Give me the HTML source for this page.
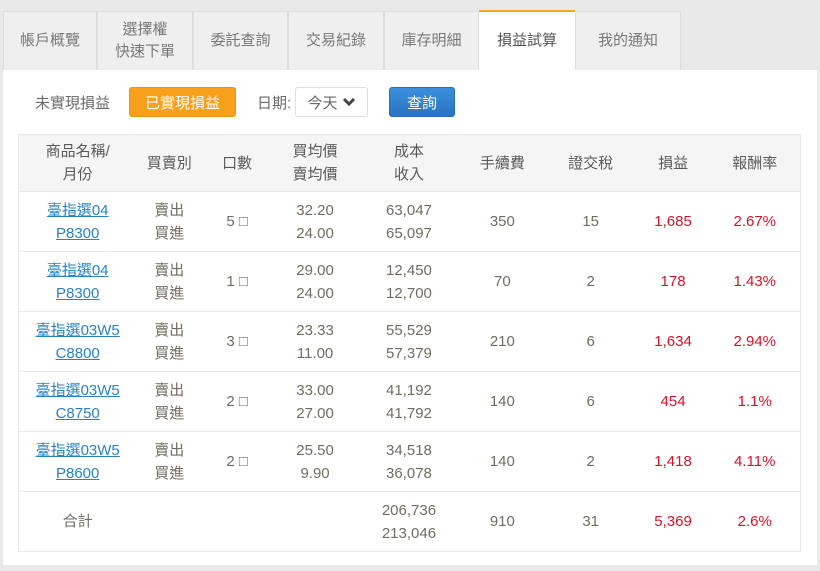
<!DOCTYPE html>
<html><head><meta charset="utf-8"><style>
*{box-sizing:border-box;margin:0;padding:0}
body{width:820px;height:571px;background:#e9e9e9;font-family:"Liberation Sans","Noto Sans CJK TC",sans-serif;font-size:15px;color:#6a6a6a;position:relative;overflow:hidden}
.tab{position:absolute;top:11px;height:59px;background:#efefef;border:1px solid #dedede;border-bottom:none;display:flex;align-items:center;justify-content:center;text-align:center;line-height:22px;color:#777}
.tab.act{background:#fff;border-top:2px solid #f5a623;color:#555}
.panel{position:absolute;left:3px;top:70px;width:814px;height:495px;background:#fff}
.abs{position:absolute}
.btn{position:absolute;top:87px;height:30px;border-radius:3px;display:flex;align-items:center;justify-content:center}
table{position:absolute;left:18px;top:134px;width:783px;border-collapse:collapse;border:1px solid #e8e8e8}
td,th{text-align:center;line-height:23px;font-weight:normal;color:#736b5f;border-top:1px solid #e8e8e8}
th{background:#f5f5f5;height:57px;color:#5a5a5a}
td{height:60px}
a{color:#2a82c0;text-decoration:underline}
.r{color:#d0142c}
</style></head><body>
<div class="tab" style="left:3px;width:94px">帳戶概覽</div>
<div class="tab" style="left:97px;width:96px">選擇權<br>快速下單</div>
<div class="tab" style="left:193px;width:95px">委託查詢</div>
<div class="tab" style="left:288px;width:96px">交易紀錄</div>
<div class="tab" style="left:384px;width:95px">庫存明細</div>
<div class="tab" style="left:575px;width:106px">我的通知</div>
<div class="panel"></div>
<div class="tab act" style="left:479px;width:96px;height:60px;top:10px;border-left:none;border-right:none">損益試算</div>
<div class="abs" style="left:35px;top:92px">未實現損益</div>
<div class="btn" style="left:129px;width:107px;background:#f8a01b;color:#fff;border:1px solid #e8940f">已實現損益</div>
<div class="abs" style="left:257px;top:92px">日期:</div>
<div class="btn" style="left:295px;width:73px;border:1px solid #ddd;color:#666">今天 <svg width="14" height="12" viewBox="0 0 14 12" style="margin-left:4px"><path d="M2 3l5 5 5-5" stroke="#444" stroke-width="3" fill="none"/></svg></div>
<div class="btn" style="left:389px;width:66px;background:linear-gradient(#3a8fdc,#2a74c2);color:#fff;border:1px solid #2a6fb5">查詢</div>
<table>
<colgroup><col style="width:118px"><col style="width:66px"><col style="width:70px"><col style="width:86px"><col style="width:102px"><col style="width:85px"><col style="width:92px"><col style="width:73px"><col style="width:91px"></colgroup>
<tr><th>商品名稱/<br>月份</th><th>買賣別</th><th>口數</th><th>買均價<br>賣均價</th><th>成本<br>收入</th><th>手續費</th><th>證交稅</th><th>損益</th><th>報酬率</th></tr>
<tr><td><a>臺指選04<br>P8300</a></td><td>賣出<br>買進</td><td>5 □</td><td>32.20<br>24.00</td><td>63,047<br>65,097</td><td>350</td><td>15</td><td class="r">1,685</td><td class="r">2.67%</td></tr>
<tr><td><a>臺指選04<br>P8300</a></td><td>賣出<br>買進</td><td>1 □</td><td>29.00<br>24.00</td><td>12,450<br>12,700</td><td>70</td><td>2</td><td class="r">178</td><td class="r">1.43%</td></tr>
<tr><td><a>臺指選03W5<br>C8800</a></td><td>賣出<br>買進</td><td>3 □</td><td>23.33<br>11.00</td><td>55,529<br>57,379</td><td>210</td><td>6</td><td class="r">1,634</td><td class="r">2.94%</td></tr>
<tr><td><a>臺指選03W5<br>C8750</a></td><td>賣出<br>買進</td><td>2 □</td><td>33.00<br>27.00</td><td>41,192<br>41,792</td><td>140</td><td>6</td><td class="r">454</td><td class="r">1.1%</td></tr>
<tr><td><a>臺指選03W5<br>P8600</a></td><td>賣出<br>買進</td><td>2 □</td><td>25.50<br>9.90</td><td>34,518<br>36,078</td><td>140</td><td>2</td><td class="r">1,418</td><td class="r">4.11%</td></tr>
<tr><td>合計</td><td></td><td></td><td></td><td>206,736<br>213,046</td><td>910</td><td>31</td><td class="r">5,369</td><td class="r">2.6%</td></tr>
</table>
</body></html>
